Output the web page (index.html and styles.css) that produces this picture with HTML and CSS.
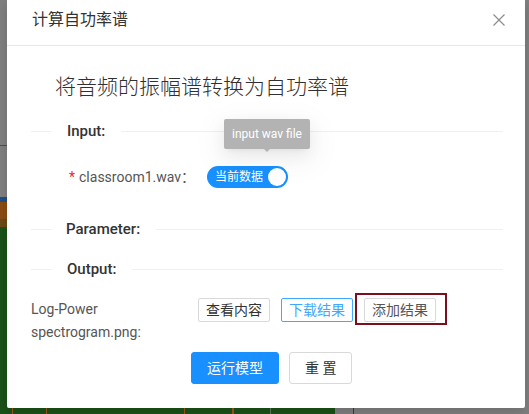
FILE: index.html
```html
<!DOCTYPE html>
<html lang="zh-CN">
<head>
<meta charset="utf-8">
<title>计算自功率谱</title>
<link rel="stylesheet" href="styles.css">
</head>
<body>
<div class="backdrop">
  <div class="axis-line"></div>
  <div class="chart">
    <span class="chart-peak"></span>
    <span class="tick tick-a"></span>
    <span class="tick tick-b"></span>
    <span class="tick tick-c"></span>
    <span class="tick tick-d"></span>
    <span class="grid-line"></span>
  </div>
  <div class="panel-edge"></div>
</div>

<div class="modal">
  <header class="modal-header">
    <span class="modal-title">计算自功率谱</span>
    <span class="modal-close">
      <svg width="12" height="12" viewBox="0 0 12 12"><path d="M0.5 0.5 L11.5 11.5 M11.5 0.5 L0.5 11.5" stroke="#8c8c8c" stroke-width="1.2" fill="none"/></svg>
    </span>
  </header>
  <div class="modal-body">
    <h2 class="intro">将音频的振幅谱转换为自功率谱</h2>

    <div class="divider"><span class="divider-text">Input:</span></div>

    <div class="form-row">
      <label class="form-label"><span class="req">*</span>classroom1.wav：</label>
      <div class="switch-wrap">
        <div class="tooltip">input wav file</div>
        <span class="switch"><span class="switch-text">当前数据</span><span class="knob"></span></span>
      </div>
    </div>

    <div class="divider divider-param"><span class="divider-text">Parameter:</span></div>

    <div class="divider divider-out"><span class="divider-text">Output:</span></div>

    <div class="out-row">
      <div class="out-label"><span class="out-label-text">Log-Power spectrogram.png:</span></div>
      <div class="out-actions">
        <button class="btn-sm">查看内容</button>
        <button class="btn-sm btn-sm-blue">下载结果</button>
        <button class="btn-sm btn-sm-grey annotated">添加结果</button>
      </div>
    </div>

    <div class="footer">
      <button class="btn btn-primary">运行模型</button>
      <button class="btn">重 置</button>
    </div>
  </div>
</div>
</body>
</html>
```

FILE: styles.css
```css
* { box-sizing: border-box; }

html, body {
  margin: 0;
  padding: 0;
  width: 529px;
  height: 414px;
  overflow: hidden;
}

body {
  background: #7f7f7f;
  font-family: "Microsoft YaHei", Roboto, "Noto Sans CJK SC", sans-serif;
  color: #333;
  position: relative;
}

/* ---------- page behind the mask ---------- */
.backdrop {
  position: absolute;
  inset: 0;
}

.axis-line {
  position: absolute;
  left: 0;
  top: 145px;
  width: 10px;
  height: 1px;
  background: #4d4d4d;
}

.chart {
  position: absolute;
  left: 0;
  top: 197px;
  width: 335px;
  height: 217px;
  background: #1b5119;
}

.chart-peak {
  position: absolute;
  left: 0;
  top: 0;
  width: 8px;
  height: 30px;
  background: linear-gradient(to bottom, #1f4f86 0 5px, #8a4d12 5px 22px, #6b4a14 22px 30px);
}

.tick {
  position: absolute;
  bottom: 0;
  width: 1px;
  height: 7px;
  background: #9a5a18;
}
.tick-a { left: 12px; }
.tick-b { left: 46px; }
.tick-c { left: 184px; }
.tick-d { left: 232px; width: 2px; }

.grid-line {
  position: absolute;
  left: 270px;
  bottom: 0;
  width: 1px;
  height: 7px;
  background: #5f7a5e;
}

.panel-edge {
  position: absolute;
  left: 353px;
  bottom: 0;
  width: 1px;
  height: 8px;
  background: #3a3a3a;
}

/* ---------- modal ---------- */
.modal {
  position: absolute;
  left: 7px;
  top: 0;
  width: 518px;
  height: 408px;
  background: #fff;
  border-radius: 0 0 2px 2px;
  box-shadow: 0 4px 12px rgba(0, 0, 0, 0.15);
}

.modal-header {
  position: relative;
  height: 46px;
  padding: 8px 24px 0 25px;
  border-bottom: 1px solid #e8e8e8;
}

.modal-title {
  font-size: 16px;
  line-height: 24px;
  color: #333;
}

.modal-close {
  position: absolute;
  left: 486px;
  top: 14px;
  width: 12px;
  height: 12px;
  display: block;
}
.modal-close svg { display: block; }

.modal-body {
  padding: 0 22px 24px 24px;
}

.intro {
  margin: 27px 0 0 0;
  padding-left: 24px;
  font-size: 21px;
  line-height: 28px;
  font-weight: 300;
  color: #303030;
}

/* dividers */
.divider {
  display: flex;
  align-items: center;
  height: 22px;
  margin-top: 19px;
}
.divider::before {
  content: "";
  width: 20px;
  height: 1px;
  background: #f0f0f0;
}
.divider::after {
  content: "";
  flex: 1;
  height: 1px;
  background: #f0f0f0;
}
.divider-text {
  padding: 0 16px;
  font-size: 15px;
  font-weight: 500;
  line-height: 22px;
  color: #333;
}
.divider-param { margin-top: 30px; }
.divider-param .divider-text { padding: 0 16px 0 15px; }
.divider-out { margin-top: 18px; }

/* form row */
.form-row {
  display: flex;
  align-items: center;
  height: 22px;
  margin-top: 24px;
}

.form-label {
  width: 176px;
  padding-left: 38px;
  font-size: 14px;
  line-height: 22px;
  color: #555;
  white-space: nowrap;
}
.req {
  color: #f5222d;
  margin-right: 4px;
}

.switch-wrap {
  position: relative;
}

.switch {
  display: flex;
  align-items: center;
  width: 81px;
  height: 22px;
  padding: 0 25px 0 8px;
  border-radius: 11px;
  background: #1890ff;
  position: relative;
}
.switch-text {
  font-size: 12px;
  line-height: 22px;
  color: #fff;
  white-space: nowrap;
}
.knob {
  position: absolute;
  right: 2px;
  top: 2px;
  width: 18px;
  height: 18px;
  border-radius: 50%;
  background: #fff;
}

.tooltip {
  position: absolute;
  left: 17px;
  top: -47px;
  width: 86px;
  height: 30px;
  border-radius: 2px;
  background: #b3b3b3;
  color: #fff;
  font-size: 12px;
  line-height: 30px;
  text-align: center;
  white-space: nowrap;
  box-shadow: 0 3px 6px -4px rgba(0,0,0,.10), 0 6px 16px rgba(0,0,0,.06), 0 9px 28px 8px rgba(0,0,0,.04);
  z-index: 2;
}
.tooltip::after {
  content: "";
  position: absolute;
  left: 40px;
  bottom: -3px;
  border-left: 3px solid transparent;
  border-right: 3px solid transparent;
  border-top: 3px solid #b3b3b3;
}

/* output row */
.out-row {
  display: flex;
  align-items: flex-start;
  margin-top: 18px;
}
.out-label {
  width: 167px;
  font-size: 14px;
  line-height: 23px;
  color: #555;
}
.out-label-text {
  display: block;
  max-width: 130px;
}
.out-actions {
  display: flex;
  gap: 11px;
}

button {
  font-family: inherit;
  cursor: pointer;
}

.btn-sm {
  height: 24px;
  padding: 0 7px;
  font-size: 14px;
  line-height: 22px;
  color: #333;
  background: #fff;
  border: 1px solid #d9d9d9;
  border-radius: 2px;
  white-space: nowrap;
}
.btn-sm-blue {
  color: #40a9ff;
  border-color: #40a9ff;
}
.btn-sm-grey {
  color: #555;
}
.annotated {
  position: relative;
}
.annotated::after {
  content: "";
  position: absolute;
  left: -10px;
  top: -6px;
  right: -12px;
  bottom: -4px;
  border: 2px solid #7b0f1f;
}

/* footer */
.footer {
  display: flex;
  gap: 10px;
  margin-top: 8px;
  padding-left: 160px;
}
.btn {
  height: 32px;
  padding: 0 15px;
  font-size: 14px;
  line-height: 30px;
  color: #333;
  background: #fff;
  border: 1px solid #d9d9d9;
  border-radius: 3px;
  white-space: nowrap;
}
.btn-primary {
  color: #fff;
  background: #1890ff;
  border-color: #1890ff;
}
```
